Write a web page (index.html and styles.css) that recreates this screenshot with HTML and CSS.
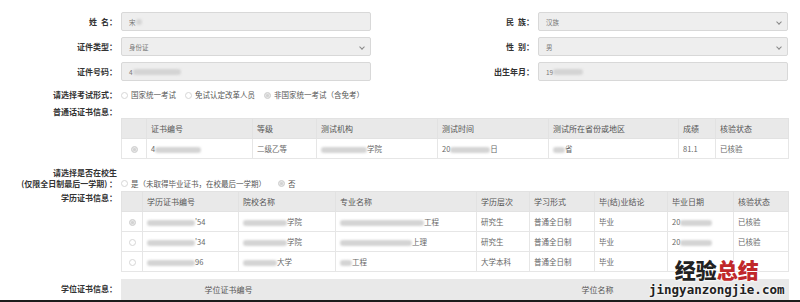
FILE: index.html
```html
<!DOCTYPE html>
<html lang="zh-CN">
<head>
  <meta charset="UTF-8">
  <meta name="viewport" content="width=device-width, initial-scale=1.0">
  <title>报名信息</title>
  <link rel="stylesheet" href="styles.css">
</head>
<body>
  <div class="page">
    <!-- 基本信息 -->
    <div class="basic">
      <div class="lbl">姓&ensp;名：</div>
      <div class="field">宋<span class="blur" style="width:6px"></span></div>
      <div class="lbl">民&ensp;族：</div>
      <div class="field select">汉族<span class="arrow"></span></div>

      <div class="lbl">证件类型：</div>
      <div class="field select">身份证<span class="arrow"></span></div>
      <div class="lbl">性&ensp;别：</div>
      <div class="field select">男<span class="arrow"></span></div>

      <div class="lbl">证件号码：</div>
      <div class="field">4<span class="blur" style="width:48px"></span></div>
      <div class="lbl">出生年月：</div>
      <div class="field">19<span class="blur" style="width:30px"></span></div>
    </div>

    <div class="row radio-row">
      <div class="lbl">请选择考试形式：</div>
      <div class="choices">
        <label class="choice"><span class="radio"></span>国家统一考试</label>
        <label class="choice"><span class="radio"></span>免试认定改革人员</label>
        <label class="choice"><span class="radio checked"></span>非国家统一考试（含免考）</label>
      </div>
    </div>

    <div class="row title-row">
      <div class="lbl">普通话证书信息：</div>
    </div>
    <div class="row">
      <div></div>
      <table class="grid">
        <colgroup>
          <col style="width:25px"><col style="width:106px"><col style="width:64px"><col style="width:121px">
          <col style="width:111px"><col style="width:130px"><col style="width:37px"><col style="width:73px">
        </colgroup>
        <tr>
          <th></th><th>证书编号</th><th>等级</th><th>测试机构</th><th>测试时间</th><th>测试所在省份或地区</th><th>成绩</th><th>核验状态</th>
        </tr>
        <tr>
          <td class="pick"><span class="radio checked"></span></td>
          <td>4<span class="blur" style="width:46px"></span></td>
          <td>二级乙等</td>
          <td><span class="blur" style="width:46px"></span>学院</td>
          <td>20<span class="blur" style="width:40px"></span>日</td>
          <td><span class="blur" style="width:12px"></span>省</td>
          <td>81.1</td>
          <td>已核验</td>
        </tr>
      </table>
    </div>

    <div class="row school-row">
      <div class="lbl two-line">请选择是否在校生<br>(仅限全日制最后一学期) ：</div>
      <div class="choices">
        <label class="choice"><span class="radio"></span>是（未取得毕业证书，在校最后一学期）</label>
        <label class="choice"><span class="radio checked"></span>否</label>
      </div>
    </div>

    <div class="row table-row">
      <div class="lbl side">学历证书信息：</div>
      <table class="grid">
        <colgroup>
          <col style="width:21px"><col style="width:96px"><col style="width:97px"><col style="width:141px"><col style="width:53px">
          <col style="width:65px"><col style="width:73px"><col style="width:66px"><col style="width:55px">
        </colgroup>
        <tr>
          <th></th><th>学历证书编号</th><th>院校名称</th><th>专业名称</th><th>学历层次</th><th>学习形式</th><th>毕(结)业结论</th><th>毕业日期</th><th>核验状态</th>
        </tr>
        <tr>
          <td class="pick"><span class="radio checked"></span></td>
          <td><span class="blur" style="width:48px"></span>'54</td>
          <td><span class="blur" style="width:44px"></span>学院</td>
          <td><span class="blur" style="width:84px"></span>工程</td>
          <td>研究生</td>
          <td>普通全日制</td>
          <td>毕业</td>
          <td>20<span class="blur" style="width:32px"></span></td>
          <td>已核验</td>
        </tr>
        <tr>
          <td class="pick"><span class="radio"></span></td>
          <td><span class="blur" style="width:48px"></span>'34</td>
          <td><span class="blur" style="width:44px"></span>学院</td>
          <td><span class="blur" style="width:72px"></span>上理</td>
          <td>研究生</td>
          <td>普通全日制</td>
          <td>毕业</td>
          <td>20<span class="blur" style="width:32px"></span></td>
          <td>已核验</td>
        </tr>
        <tr>
          <td class="pick"><span class="radio"></span></td>
          <td><span class="blur" style="width:48px"></span>96</td>
          <td><span class="blur" style="width:34px"></span>大学</td>
          <td><span class="blur" style="width:12px"></span>工程</td>
          <td>大学本科</td>
          <td>普通全日制</td>
          <td>毕业</td>
          <td></td>
          <td></td>
        </tr>
      </table>
    </div>

    <div class="row table-row degree-row">
      <div class="lbl side">学位证书信息：</div>
      <table class="grid center">
        <colgroup>
          <col style="width:21px"><col style="width:172px"><col style="width:200px"><col style="width:166px"><col style="width:108px">
        </colgroup>
        <tr>
          <th></th><th>学位证书编号</th><th></th><th>学位名称</th><th></th>
        </tr>
      </table>
    </div>
  </div>

  <div class="watermark">
    <div class="wm-cn">经验<span class="wm-red">总结</span></div>
    <div class="wm-en">jingyanzongjie.com</div>
  </div>
  <div class="edge"></div>
</body>
</html>
```

FILE: styles.css
```css
* {
  box-sizing: border-box;
}
body {
  margin: 0;
  font-family: "Noto Sans CJK SC", "Noto Sans", sans-serif;
  color: #333;
  background-color: #fff;
  position: relative;
  height: 302px;
  overflow: hidden;
}
.page {
  padding: 12px 0 0 0;
}
.basic {
  display: grid;
  grid-template-columns: 121px 250px 167px 250px;
  grid-auto-rows: 19px;
  row-gap: 6px;
}
.lbl {
  text-align: right;
  padding-right: 4px;
  font-size: 8px;
  font-weight: 700;
  line-height: 19px;
  color: #333;
  white-space: nowrap;
}
.field {
  display: flex;
  align-items: center;
  background-color: #eee;
  border: 1px solid #d8d8d8;
  border-radius: 2px;
  padding-left: 7px;
  font-size: 6.5px;
  color: #777;
  position: relative;
}
.select .arrow {
  position: absolute;
  right: 6px;
  top: 7px;
  width: 4px;
  height: 4px;
  border-right: 1px solid #888;
  border-bottom: 1px solid #888;
  transform: rotate(45deg);
}
.blur {
  display: inline-block;
  height: 6px;
  background-color: #d4d4d4;
  border-radius: 3px;
  filter: blur(1px);
  vertical-align: middle;
}
.row {
  display: grid;
  grid-template-columns: 121px 667px;
}
.radio-row {
  margin-top: 8px;
  height: 12px;
}
.radio-row .lbl,
.title-row .lbl {
  line-height: 12px;
}
.title-row {
  margin-top: 5px;
  height: 12px;
}
.choices {
  display: flex;
  align-items: center;
  gap: 9px;
  font-size: 7.5px;
  color: #555;
  line-height: 12px;
}
.choice {
  display: flex;
  align-items: center;
  gap: 3px;
}
.radio {
  display: inline-block;
  width: 7px;
  height: 7px;
  border: 1px solid #d6d6d6;
  border-radius: 50%;
  background-color: #fff;
}
.radio.checked {
  background-color: #d2d2d2;
  border-color: #d2d2d2;
  box-shadow: inset 0 0 0 1px #e8e8e8;
}
.school-row {
  margin-top: 8px;
  align-items: end;
}
.school-row .lbl {
  line-height: 11px;
}
.school-row .choices {
  height: 11px;
  gap: 12px;
}
.table-row {
  margin-top: 2px;
  align-items: start;
}
.degree-row {
  margin-top: 7px;
}
.lbl.side {
  line-height: 12px;
  padding-top: 1px;
}
.degree-row .lbl.side {
  padding-top: 4px;
}
.grid {
  border-collapse: collapse;
  table-layout: fixed;
  width: 667px;
  font-size: 7.5px;
  color: #666;
}
.grid th {
  background-color: #e9e9e9;
  border: 1px solid #e2e2e2;
  font-weight: normal;
  font-size: 8px;
  color: #555;
  text-align: left;
  height: 20px;
  padding: 0 4px;
  white-space: nowrap;
}
.grid td {
  border: 1px solid #e6e6e6;
  height: 20px;
  padding: 0 4px;
  white-space: nowrap;
  overflow: hidden;
}
.grid.center th {
  text-align: center;
  border-color: #e9e9e9;
}
.grid td.pick {
  text-align: center;
  padding: 0;
}
.grid td.pick .radio {
  vertical-align: middle;
}
.watermark {
  position: absolute;
  left: 649px;
  top: 256px;
  text-align: center;
  text-shadow: 0 0 3px #fff, 0 0 3px #fff;
}
.wm-cn {
  font-size: 21px;
  font-weight: 900;
  line-height: 26px;
  color: #222;
}
.wm-red {
  color: #c0282b;
}
.wm-en {
  font-family: "DejaVu Sans Mono", monospace;
  font-size: 12.5px;
  font-weight: bold;
  line-height: 15px;
  color: #222;
}
.edge {
  position: absolute;
  left: 0;
  right: 0;
  bottom: 0;
  height: 2px;
  background-color: #1c1c1c;
}
```
